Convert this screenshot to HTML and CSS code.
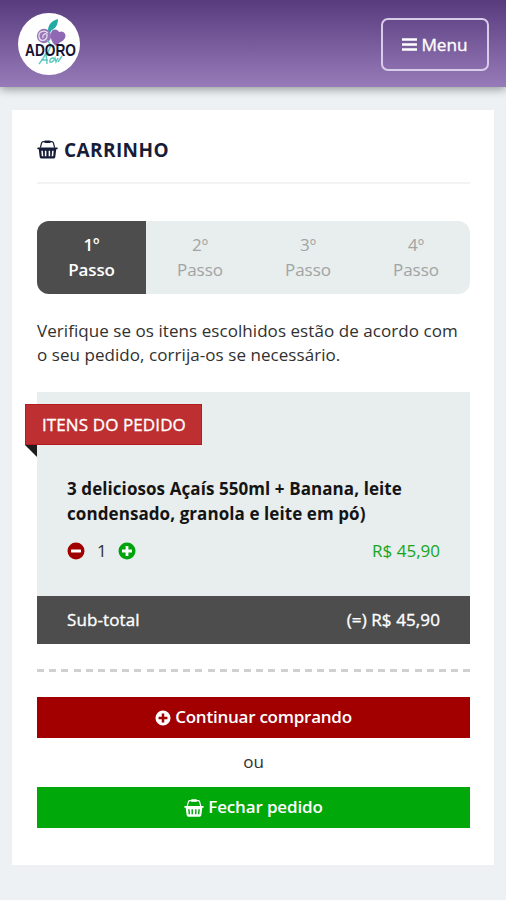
FILE: index.html
```html
<!DOCTYPE html>
<html lang="pt-BR">
<head>
<meta charset="utf-8">
<meta name="viewport" content="width=device-width, initial-scale=1">
<title>Carrinho</title>
<link rel="stylesheet" href="styles.css">
</head>
<body>
<svg class="defs" width="0" height="0" aria-hidden="true">
  <symbol id="basket" viewBox="0 0 22 20">
    <path d="M3.500 8 4.800 3Q5.200 1.800 6.500 1.800H15.500Q16.800 1.800 17.200 3L18.500 8" fill="none" stroke="currentColor" stroke-width="1.300"/>
    <rect x="7.700" y=".4" width="6.600" height="2.700" rx="1" fill="currentColor"/>
    <path fill="currentColor" fill-rule="evenodd" d="M1 7.800H21Q21.800 7.800 21.800 8.800T21 9.800H20.200L19.200 17.900Q18.900 19.600 17.300 19.600H4.700Q3.100 19.600 2.800 17.900L1.800 9.800H1Q.2 9.800 .2 8.800T1 7.800ZM4.500 11.300 5 17H6.600L6.100 11.300ZM8.200 11.300V17H9.800V11.300ZM12.200 11.300V17H13.800V11.300ZM15.900 11.300 15.400 17H17L17.500 11.300Z"/>
  </symbol>
  <symbol id="plus" viewBox="0 0 18 18">
    <path fill="currentColor" fill-rule="evenodd" d="M9 .5A8.500 8.500 0 1 0 9 17.500A8.500 8.500 0 1 0 9 .5ZM7.600 4H10.400V7.600H14V10.400H10.400V14H7.600V10.400H4V7.600H7.600Z"/>
  </symbol>
  <symbol id="minus" viewBox="0 0 18 18">
    <circle cx="9" cy="9" r="8.500" fill="currentColor"/>
    <rect x="4" y="7.500" width="10" height="3" rx=".4" fill="#fff"/>
  </symbol>
</svg>
<header class="topbar">
  <svg class="logo" viewBox="0 0 62 62" role="img" aria-label="Adoro Açaí">
    <circle cx="31" cy="31" r="31" fill="#fff"/>
    <path d="M30 17C31 10 34 8 40 6C40 12 37 17 31 18L37 10L30 24Z" fill="#22aaa5"/>
    <circle cx="26" cy="23" r="7.200" fill="#9874b8"/>
    <path d="M30 20C26 16 20 19 21 24S28 28 29 23.500S24 20.500 25 25" fill="none" stroke="#e4d8ec" stroke-width="1.300"/>
    <path d="M33 20C34 15 40 16 41 19C45 17 49 21 47 25C45 29 41 29 38 33C34 30 32 25 33 20Z" fill="#8e68b2"/>
    <path d="M29 27 33 32 28 44M21 51Q26 45 28 40L29 51M23 47H30M36 45Q31 45 32 49Q35 50 37 45L38 49 40 45M40 49 44 43" fill="none" stroke="#5acac0" stroke-width="1.400"/>
    <text class="logo-text" x="7" y="43" textLength="51" lengthAdjust="spacingAndGlyphs">ADORO</text>
  </svg>
  <button class="menu" type="button">
    <svg class="bars" viewBox="0 0 15 15" aria-hidden="true"><path d="M0 2.500H15M0 7.500H15M0 12.500H15" stroke="currentColor" stroke-width="2.300"/></svg>
    <span>Menu</span>
  </button>
</header>
<main class="card">
  <h1 class="title"><svg class="basket"><use href="#basket"/></svg><span>CARRINHO</span></h1>
  <ol class="steps">
    <li class="step active">1º<br>Passo</li>
    <li class="step">2º<br>Passo</li>
    <li class="step">3º<br>Passo</li>
    <li class="step">4º<br>Passo</li>
  </ol>
  <p class="intro">Verifique se os itens escolhidos estão de acordo com<br>o seu pedido, corrija-os se necessário.</p>
  <section class="order">
    <h2 class="ribbon"><span>ITENS DO PEDIDO</span></h2>
    <div class="item">
      <h3 class="name">3 deliciosos Açaís 550ml + Banana, leite<br>condensado, granola e leite em pó)</h3>
      <div class="row">
        <div class="quantity">
          <svg class="round remove"><use href="#minus"/></svg>
          <span>1</span>
          <svg class="round add"><use href="#plus"/></svg>
        </div>
        <span class="price">R$ 45,90</span>
      </div>
    </div>
    <div class="subtotal"><span>Sub-total</span><span>(=) R$ 45,90</span></div>
  </section>
  <div class="divider"></div>
  <a class="button continue"><svg class="button-plus"><use href="#plus"/></svg><span>Continuar comprando</span></a>
  <p class="or">ou</p>
  <a class="button checkout"><svg class="button-basket"><use href="#basket"/></svg><span>Fechar pedido</span></a>
</main>
</body>
</html>
```
FILE: styles.css
```css
* { box-sizing: border-box; }
body {
  margin: 0;
  min-height: 900px;
  background: #edf1f4;
  color: #303030;
  font: 17px/24.5px "Open Sans", "Noto Sans", sans-serif;
}
.defs { position: absolute; }
h1, h2, h3, p, ol { margin: 0; padding: 0; }
svg { display: block; flex-shrink: 0; }
.topbar {
  display: flex;
  align-items: center;
  justify-content: space-between;
  height: 87px;
  padding: 1px 17px 0 18px;
  background: linear-gradient(#583b7d, #977bb9);
  box-shadow: 0 2px 9px rgba(0, 0, 0, .4);
}
.logo { width: 62px; height: 62px; overflow: visible; }
.logo-text { font: 700 17px "Liberation Sans", sans-serif; fill: #161332; }
.menu {
  display: flex;
  align-items: center;
  justify-content: center;
  gap: 4px;
  width: 108px;
  height: 53px;
  padding: 0;
  border: 2px solid #d9cce8;
  border-radius: 7px;
  background: transparent;
  color: #fff;
  font: 17.200px/25px "Open Sans", sans-serif;
  -webkit-text-stroke: .35px currentColor;
}
.bars { width: 15px; height: 15px; }
.card {
  display: flex;
  flex-direction: column;
  width: 482px;
  height: 755px;
  margin: 23px 12px 35px;
  padding: 0 24px 0 25px;
  background: #fff;
}
.title {
  display: flex;
  align-items: center;
  gap: 6px;
  height: 74px;
  padding-top: 9px;
  border-bottom: 2px solid #f2f3f4;
  color: #171d38;
  font-size: 19px;
  font-weight: 700;
  letter-spacing: .4px;
}
.basket { width: 21px; height: 19px; margin-top: -2px; }
.steps {
  display: grid;
  grid-template-columns: 109px repeat(3, 1fr);
  height: 73px;
  margin-top: 37px;
  overflow: hidden;
  border-radius: 12px;
  background: #e8eded;
  list-style: none;
}
.step { padding-top: 12px; color: #a1a4a4; text-align: center; }
.active { background: #4d4d4d; color: #fff; font-weight: 600; letter-spacing: -.1px; }
.intro { margin-top: 24.500px; letter-spacing: .06px; white-space: nowrap; }
.order { height: 252px; margin-top: 24.500px; padding-top: 12px; background: #e8eded; }
.ribbon {
  position: relative;
  display: flex;
  align-items: center;
  width: 177px;
  height: 41px;
  margin-left: -12px;
  padding: 1px 0 0 16px;
  border: 1px solid #b31b20;
  background: #bd2f31;
  color: #fff;
  font-size: 17px;
  font-weight: 400;
  letter-spacing: .1px;
  white-space: nowrap;
  -webkit-text-stroke: .35px currentColor;
}
.ribbon::after {
  content: "";
  position: absolute;
  top: 40px;
  left: -1px;
  border-top: 12px solid #1d1d1d;
  border-left: 12px solid transparent;
}
.item { height: 151px; padding: 32px 30px 0; }
.name { color: #141414; font-size: 17px; font-weight: 700; letter-spacing: .08px; white-space: nowrap; }
.row { display: flex; align-items: center; justify-content: space-between; margin-top: 13px; }
.quantity { display: flex; align-items: center; gap: 12px; }
.round { width: 18px; height: 18px; }
.quantity .add { margin-left: -1px; }
.remove { color: #a00000; }
.add { color: #00a30a; background: radial-gradient(circle, #fff 0 6px, transparent 7px); }
.price { color: #16a51c; }
.subtotal {
  display: flex;
  align-items: center;
  justify-content: space-between;
  height: 48px;
  padding: 0 30px;
  background: #4d4d4d;
  color: #fff;
  letter-spacing: .1px;
  -webkit-text-stroke: .35px currentColor;
}
.divider {
  height: 3px;
  margin-top: 25px;
  background: repeating-linear-gradient(90deg, #d0d0d0 0 7px, transparent 7px 12.180px);
}
.button {
  display: flex;
  align-items: center;
  justify-content: center;
  gap: 4px;
  height: 41px;
  color: #fff;
  font-weight: 600;
}
.continue { margin-top: 25px; background: #a20000; letter-spacing: -.24px; }
.button-plus { width: 16px; height: 16px; }
.or { height: 49px; padding-top: 12px; text-align: center; }
.checkout { background: #00a80a; letter-spacing: -.15px; }
.button-basket { width: 20px; height: 18px; }
```
